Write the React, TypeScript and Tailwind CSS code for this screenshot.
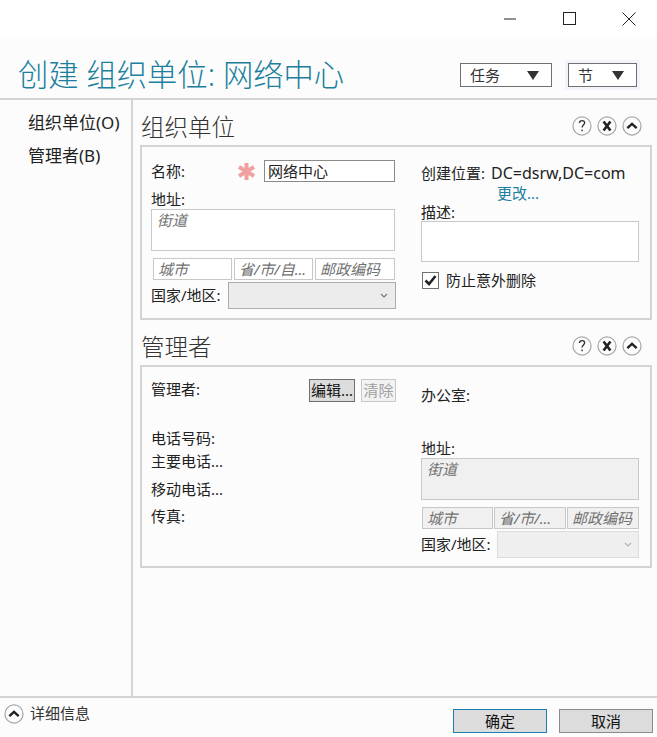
import React from "react";

const Circle = ({ kind }: { kind: "help" | "close" | "up" }) => (
  <svg width="20" height="20" viewBox="0 0 21 21" className="block shrink-0">
    <circle cx="10.5" cy="10.5" r="9.5" fill="#fdfdfd" stroke="#a8a8a8" strokeWidth="1.3" />
    {kind === "help" && (
      <path d="M7.8 7.4c0-1.7 1.2-2.6 2.8-2.6 1.6 0 2.7 1 2.7 2.4 0 2.2-2.7 2.5-2.7 4.9M10.6 14.2v1.8" fill="none" stroke="#333" strokeWidth="1.4" />
    )}
    {kind === "close" && <path d="M6.9 5.8l7.2 9.4M14.1 5.8l-7.2 9.4" fill="none" stroke="#222" strokeWidth="2.8" />}
    {kind === "up" && <path d="M5.6 12.8l4.9-4.6 4.9 4.6" fill="none" stroke="#222" strokeWidth="2.5" />}
  </svg>
);

const Heading = ({ title }: { title: string }) => (
  <div className="flex items-center justify-between h-[32px] pl-[1px] pr-[10px]">
    <span className="text-[23.5px] leading-[32px] font-light text-[#333]">{title}</span>
    <div className="flex items-center gap-[5px] mb-[2px]">
      <Circle kind="help" />
      <Circle kind="close" />
      <Circle kind="up" />
    </div>
  </div>
);

const Ph = ({ w, text, gray }: { w: string; text: string; gray?: boolean }) => (
  <div className={`${w} h-[22px] border border-[#c8c8c8] pl-[4px] text-[15px] leading-[20px] italic text-[#707070] overflow-hidden whitespace-nowrap ${gray ? "bg-[#f0f0f0]" : "bg-white"}`}>
    {text}
  </div>
);

const Chevron = ({ color }: { color: string }) => (
  <svg width="8" height="5" viewBox="0 0 8 5"><path d="M1 1l3 3 3-3" fill="none" stroke={color} strokeWidth="1.2" /></svg>
);

const Drop = ({ w, label, gap, focus }: { w: string; label: string; gap: string; focus?: boolean }) => (
  <div className={focus ? "p-[3px] bg-[#f3f3fb]" : "p-[3px]"}>
    <div className={`${w} h-[24px] border border-[#707070] bg-white flex items-center pl-[9px] text-[15px] text-[#333]`}>
      <span>{label}</span>
      <svg width="12" height="9" viewBox="0 0 12 9" className={gap}><path d="M0 0h12L6 9z" fill="#333" /></svg>
    </div>
  </div>
);

export default function App() {
  return (
    <div className="w-[657px] h-[737px] flex flex-col bg-[#fcfcfc] overflow-hidden text-[15px] text-[#222] font-['Noto_Sans','Noto_Sans_CJK_SC',sans-serif]">
      <div className="h-[37px] bg-white flex items-center justify-end shrink-0">
        <svg width="12" height="2" viewBox="0 0 12 2" className="mr-[47px]"><path d="M0 1h12" stroke="#222" /></svg>
        <svg width="13" height="13" viewBox="0 0 13 13" className="mr-[46px]"><rect x=".5" y=".5" width="12" height="12" fill="none" stroke="#222" /></svg>
        <svg width="14" height="14" viewBox="0 0 14 14" className="mr-[21px]"><path d="M.5.5l13 13M13.5.5l-13 13" stroke="#222" /></svg>
      </div>

      <div className="h-[63px] shrink-0 border-b-2 border-[#d4d4d4] flex items-center pl-[18px] pr-[17px] pt-[15px]">
        <h1 className="flex-1 text-[30.3px] leading-[40px] font-light text-[#1b7f9d] whitespace-nowrap">创建 组织单位: 网络中心</h1>
        <Drop w="w-[92px]" label="任务" gap="ml-[27px]" />
        <div className="w-[10px]" />
        <Drop w="w-[69px]" label="节" gap="ml-[19px]" focus />
      </div>

      <div className="flex-1 flex min-h-0">
        <nav className="w-[133px] shrink-0 border-r-2 border-[#d4d4d4] pl-[28px] pt-[11px] text-[17px] leading-[24px] text-[#222]">
          <div className="whitespace-nowrap">组织单位(O)</div>
          <div className="mt-[9px] whitespace-nowrap">管理者(B)</div>
        </nav>

        <main className="flex-1 pl-[7px] pr-[5px] pt-[11px]">
          <Heading title="组织单位" />
          <section className="mt-[2px] h-[175px] border-2 border-[#d4d4d4] flex pl-[9px]">
            <div className="w-[245px] pt-[13px]">
              <div className="flex items-center h-[22px]">
                <span className="w-[86px]">名称:</span>
                <span className="w-[27px]">
                  <svg width="19" height="19" viewBox="0 0 19 19"><path d="M9.5 1v17M2 5l15 9M17 5L2 14" stroke="#f0a0a0" strokeWidth="4" /></svg>
                </span>
                <div className="w-[131px] h-[22px] border border-[#8a8a8a] bg-white pl-[3px] leading-[20px]">网络中心</div>
              </div>
              <div className="h-[27px] flex items-end leading-[20px]">地址:</div>
              <div className="w-[244px] h-[42px] border border-[#c8c8c8] bg-white pl-[5px] italic text-[#707070] leading-[20px]">街道</div>
              <div className="flex gap-[2px] mt-[7px] ml-[2px] w-[242px]">
                <Ph w="w-[79px]" text="城市" />
                <Ph w="w-[79px]" text="省/市/自..." />
                <Ph w="w-[80px]" text="邮政编码" />
              </div>
              <div className="flex items-center mt-[2px]">
                <span className="w-[77px] whitespace-nowrap">国家/地区:</span>
                <div className="w-[168px] h-[27px] border border-[#adadad] bg-[#ececec] flex items-center justify-end pr-[7px]">
                  <Chevron color="#777" />
                </div>
              </div>
            </div>
            <div className="w-[218px] ml-[25px] pt-[16px]">
              <div className="h-[20px] leading-[20px] whitespace-nowrap flex">
                <span className="w-[70px]">创建位置:</span>
                <span className="text-[16px]">DC=dsrw,DC=com</span>
              </div>
              <div className="h-[21px] pl-[76px] leading-[21px] text-[#1b7f9d]">更改...</div>
              <div className="h-[17px] leading-[16px]">描述:</div>
              <div className="h-[41px] border border-[#c8c8c8] bg-white" />
              <div className="flex items-center h-[20px] mt-[8px] ml-[1px]">
                <div className="w-[17px] h-[17px] border border-[#707070] bg-white flex items-center justify-center">
                  <svg width="13" height="11" viewBox="0 0 13 11"><path d="M1.5 5.5l3.5 3.5L11.5 1" fill="none" stroke="#222" strokeWidth="2.6" /></svg>
                </div>
                <span className="ml-[7px] leading-[20px]">防止意外删除</span>
              </div>
            </div>
          </section>

          <div className="mt-[11px]"><Heading title="管理者" /></div>
          <section className="mt-[2px] h-[203px] border-2 border-[#d4d4d4] flex pl-[9px]">
            <div className="w-[245px] pt-[12px]">
              <div className="flex h-[24px]">
                <span className="w-[158px] leading-[20px]">管理者:</span>
                <div className="w-[46px] h-[23px] border border-[#707070] bg-[#dcdcdc] text-center leading-[21px] text-[#111] whitespace-nowrap">编辑...</div>
                <div className="w-[35px] h-[23px] ml-[6px] border border-[#c8c8c8] bg-[#f2f2f2] text-center leading-[21px] text-[#a0a0a0] whitespace-nowrap">清除</div>
              </div>
              <div className="mt-[25px] leading-[20px]">电话号码:</div>
              <div className="mt-[3px] leading-[20px]">主要电话...</div>
              <div className="mt-[8px] leading-[20px]">移动电话...</div>
              <div className="mt-[7px] leading-[20px]">传真:</div>
            </div>
            <div className="w-[218px] ml-[25px] pt-[18px]">
              <div className="leading-[20px]">办公室:</div>
              <div className="mt-[33px] h-[20px] leading-[20px]">地址:</div>
              <div className="h-[42px] border border-[#c8c8c8] bg-[#f0f0f0] pl-[5px] italic text-[#707070] leading-[20px]">街道</div>
              <div className="flex gap-[1px] mt-[7px] ml-[1px]">
                <Ph w="w-[71px]" text="城市" gray />
                <Ph w="w-[72px]" text="省/市/..." gray />
                <Ph w="w-[72px]" text="邮政编码" gray />
              </div>
              <div className="flex items-center mt-[2px]">
                <span className="w-[76px] whitespace-nowrap">国家/地区:</span>
                <div className="w-[142px] h-[27px] border border-[#dcdcdc] bg-[#efefef] flex items-center justify-end pr-[6px]">
                  <Chevron color="#b5b5b5" />
                </div>
              </div>
            </div>
          </section>
        </main>
      </div>

      <footer className="h-[41px] shrink-0 border-t-2 border-[#d4d4d4] flex items-start pl-[4px] pr-[4px]">
        <div className="mt-[6px]"><Circle kind="up" /></div>
        <span className="ml-[6px] mt-[5px] leading-[20px] text-[#333]">详细信息</span>
        <div className="ml-auto flex gap-[12px] mt-[11px]">
          <button className="w-[94px] h-[24px] border border-[#1c7fb0] bg-[#dcdcdc] text-[#111] leading-[22px]">确定</button>
          <button className="w-[94px] h-[24px] border border-[#8a8a8a] bg-[#dcdcdc] text-[#111] leading-[22px]">取消</button>
        </div>
      </footer>
    </div>
  );
}
